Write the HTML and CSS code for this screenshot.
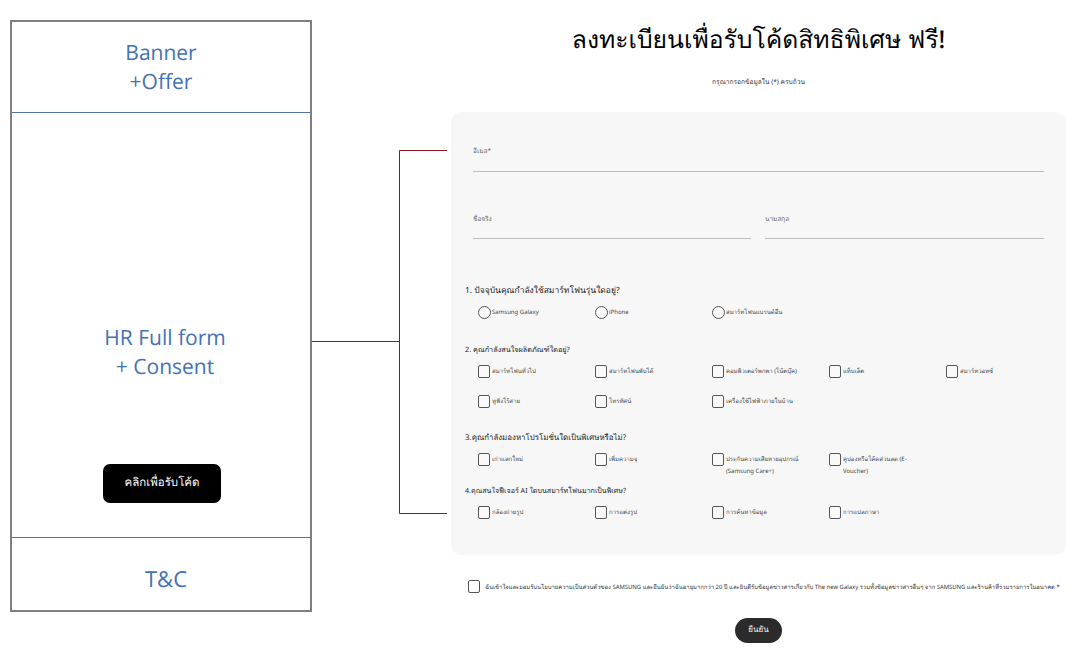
FILE: index.html
```html
<!DOCTYPE html>
<html lang="th">
<head>
<meta charset="utf-8">
<title>ลงทะเบียนเพื่อรับโค้ดสิทธิพิเศษ</title>
<link rel="stylesheet" href="styles.css">
</head>
<body>
<div class="page">

	<div class="wire">
		<div class="wire-top">Banner<br>+Offer</div>
		<div class="wire-mid">
			<div class="wire-mid-text">HR Full form<br>+ Consent</div>
			<div class="wire-btn">คลิกเพื่อรับโค้ด</div>
		</div>
		<div class="wire-end">T&amp;C</div>
	</div>

	<svg class="link" width="139" height="592" viewBox="0 0 139 592">
		<path d="M0 321.5H88M87.5 130.5V493.5M87.5 130.5H135M87.5 493.5H135" fill="none" stroke="#8b1a1f" stroke-width="1"/>
	</svg>

	<div class="reg">
		<h1>ลงทะเบียนเพื่อรับโค้ดสิทธิพิเศษ ฟรี!</h1>
		<p class="note">กรุณากรอกข้อมูลใน (*) ครบถ้วน</p>

		<div class="card">
			<div class="field field-email">อีเมล*</div>
			<div class="names">
				<div class="field">ชื่อจริง</div>
				<div class="field">นามสกุล</div>
			</div>

			<div class="q q1">1. ปัจจุบันคุณกำลังใช้สมาร์ทโฟนรุ่นใดอยู่?</div>
			<div class="opts">
				<div class="opt"><span class="radio"></span>Samsung Galaxy</div>
				<div class="opt"><span class="radio"></span>iPhone</div>
				<div class="opt"><span class="radio"></span>สมาร์ทโฟนแบรนด์อื่น</div>
			</div>

			<div class="q q2">2. คุณกำลังสนใจผลิตภัณฑ์ใดอยู่?</div>
			<div class="opts">
				<div class="opt"><span class="box"></span>สมาร์ทโฟนทั่วไป</div>
				<div class="opt"><span class="box"></span>สมาร์ทโฟนพับได้</div>
				<div class="opt"><span class="box"></span>คอมพิวเตอร์พกพา (โน้ตบุ๊ค)</div>
				<div class="opt"><span class="box"></span>แท็บเล็ต</div>
				<div class="opt"><span class="box"></span>สมาร์ทวอทช์</div>
				<div class="opt"><span class="box"></span>หูฟังไร้สาย</div>
				<div class="opt"><span class="box"></span>โทรทัศน์</div>
				<div class="opt"><span class="box"></span>เครื่องใช้ไฟฟ้าภายในบ้าน</div>
			</div>

			<div class="q q3">3.คุณกำลังมองหาโปรโมชั่นใดเป็นพิเศษหรือไม่?</div>
			<div class="opts">
				<div class="opt"><span class="box"></span>เก่าแลกใหม่</div>
				<div class="opt"><span class="box"></span>เพิ่มความจุ</div>
				<div class="opt"><span class="box"></span><span>ประกันความเสียหายอุปกรณ์<br>(Samsung Care+)</span></div>
				<div class="opt"><span class="box"></span><span>คูปองหรือโค้ดส่วนลด (E-<br>Voucher)</span></div>
			</div>

			<div class="q q4">4.คุณสนใจฟีเจอร์ AI ใดบนสมาร์ทโฟนมากเป็นพิเศษ?</div>
			<div class="opts">
				<div class="opt"><span class="box"></span>กล้องถ่ายรูป</div>
				<div class="opt"><span class="box"></span>การแต่งรูป</div>
				<div class="opt"><span class="box"></span>การค้นหาข้อมูล</div>
				<div class="opt"><span class="box"></span>การแปลภาษา</div>
			</div>
		</div>

		<div class="consent">
			<span class="box"></span>
			<span class="consent-text">ฉันเข้าใจและยอมรับนโยบายความเป็นส่วนตัวของ SAMSUNG และยืนยันว่าฉันอายุมากกว่า 20 ปี และยินดีรับข้อมูลข่าวสารเกี่ยวกับ The new Galaxy รวมทั้งข้อมูลข่าวสารอื่นๆ จาก SAMSUNG และร้านค้าที่ร่วมรายการในอนาคต *</span>
		</div>
		<div class="send"><span class="send-btn">ยืนยัน</span></div>
	</div>

</div>
</body>
</html>
```

FILE: styles.css
```css
html, body {
	margin: 0;
	height: 662px;
	overflow: hidden;
	background: #fff;
}

body {
	font-family: "Noto Sans", "Liberation Sans", sans-serif;
	text-rendering: geometricPrecision;
}

.page {
	display: flex;
	align-items: flex-start;
	width: 1081px;
	height: 662px;
}

/* left wireframe */
.wire {
	flex: none;
	box-sizing: border-box;
	width: 302px;
	height: 592px;
	margin: 20px 0 0 10px;
	border: 2px solid #7f7f7f;
	display: flex;
	flex-direction: column;
	color: #4472b4;
	font-family: "Open Sans", sans-serif;
	font-size: 21px;
	line-height: 29px;
	text-align: center;
}

.wire-top {
	box-sizing: border-box;
	height: 91px;
	padding-top: 17px;
	border-bottom: 1px solid #4f74a8;
}

.wire-mid {
	box-sizing: border-box;
	height: 425px;
	padding-top: 211px;
	border-bottom: 1px solid #4f74a8;
	display: flex;
	flex-direction: column;
	align-items: center;
}

.wire-mid-text {
	margin-left: 8px;
}

.wire-btn {
	width: 118px;
	height: 39px;
	margin: 82px 0 0 2px;
	background: #000;
	color: #fff;
	border-radius: 7px;
	font-size: 11.5px;
	line-height: 37px;
}

.wire-end {
	padding-top: 27px;
	margin-left: 10px;
	font-size: 22px;
}

.link {
	flex: none;
	display: block;
	margin-top: 20px;
}

/* registration form */
.reg {
	flex: none;
	width: 615px;
}

h1 {
	margin: 24px 0 0;
	font-size: 24.7px;
	font-weight: 500;
	line-height: 32px;
	color: #000;
	text-align: center;
}

.note {
	margin: 20px 0 0;
	font-size: 6.6px;
	line-height: 12px;
	color: #333;
	text-align: center;
}

.card {
	box-sizing: border-box;
	height: 443px;
	margin-top: 24px;
	padding: 31px 22px 0 14px;
	background: #f7f7f7;
	border-radius: 10px;
}

.field {
	box-sizing: border-box;
	height: 29px;
	padding-top: 2px;
	border-bottom: 1px solid #bdbdbd;
	font-size: 6.5px;
	line-height: 12px;
	color: #666;
}

.field-email {
	margin: 0 0 0 8px;
}

.names {
	display: grid;
	grid-template-columns: 278px 279px;
	gap: 14px;
	margin: 38px 0 0 8px;
}

.names .field {
	padding-top: 3px;
}

.q {
	line-height: 12px;
	color: #222;
}

.q1 { margin-top: 46px; font-size: 8.5px; }
.q2 { margin-top: 25px; font-size: 7.3px; }
.q3 { margin-top: 24px; font-size: 7.9px; }
.q4 { margin-top: 8px; font-size: 7.1px; }

.opts {
	display: grid;
	grid-template-columns: repeat(5, 117px);
	row-gap: 17px;
	margin: 9px 0 0 13px;
}

.opt {
	display: flex;
	align-items: flex-start;
	min-height: 12px;
	font-size: 6px;
	line-height: 12px;
	color: #444;
}

.box, .radio {
	flex: none;
	box-sizing: border-box;
	width: 12px;
	height: 13px;
	margin-right: 2px;
	border: 1px solid #555;
	border-radius: 2px;
	background: #f9f9f9;
}

.radio {
	width: 13px;
	margin-right: 1px;
	border-radius: 50%;
}

.consent {
	display: flex;
	align-items: center;
	margin: 25px 0 0 17px;
	height: 13px;
}

.consent .box {
	background: #fff;
	margin-right: 5px;
}

.consent-text {
	font-size: 5.9px;
	line-height: 12px;
	color: #333;
	white-space: nowrap;
}

.send {
	display: flex;
	justify-content: center;
	margin-top: 25px;
}

.send-btn {
	width: 47px;
	height: 25px;
	border-radius: 13px;
	background: #2b2b2b;
	color: #fff;
	font-size: 8px;
	line-height: 24px;
	text-align: center;
}
```
